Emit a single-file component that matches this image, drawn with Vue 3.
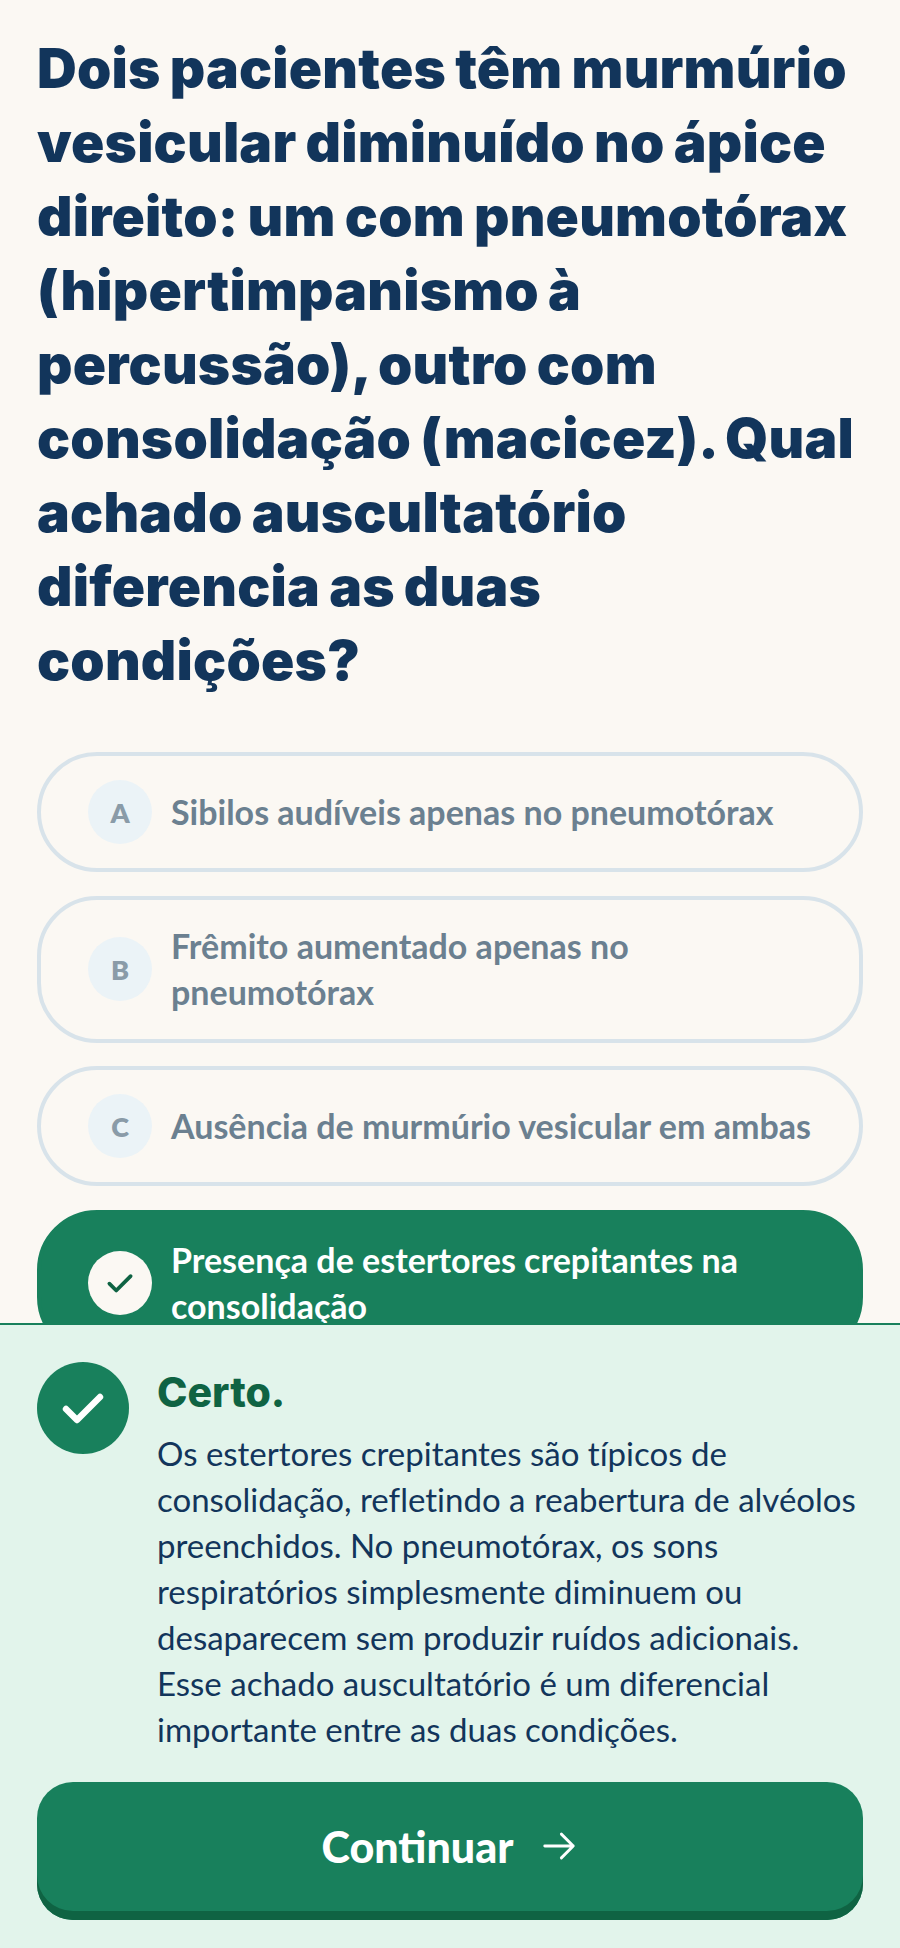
<template>
  <div class="screen">
    <div class="scroll">
      <h1 class="question">Dois pacientes têm murmúrio vesicular diminuído no ápice direito: um com pneumotórax (hipertimpanismo à percussão), outro com consolidação (macicez). Qual achado auscultatório diferencia as duas condições?</h1>
      <div class="options">
        <div v-for="opt in options" :key="opt.letter" class="option" :class="{ correct: opt.correct }">
          <span class="badge">
            <svg v-if="opt.correct" width="30" height="30" viewBox="0 0 24 24" fill="none">
              <path d="M3.500 12.500l5.500 5.500L20.500 6.500" stroke="#0f6343" stroke-width="3" stroke-linecap="round" stroke-linejoin="round" />
            </svg>
            <template v-else>{{ opt.letter }}</template>
          </span>
          <span class="option-text">{{ opt.text }}</span>
        </div>
      </div>
    </div>
    <div class="feedback">
      <div class="feedback-row">
        <span class="feedback-icon">
          <svg width="48" height="48" viewBox="0 0 24 24" fill="none">
            <path d="M3.500 12.500l5.500 5.500L20.500 6.500" stroke="#fff" stroke-width="3.200" stroke-linecap="round" stroke-linejoin="round" />
          </svg>
        </span>
        <div class="feedback-body">
          <div class="feedback-title">Certo.</div>
          <p class="feedback-text">Os estertores crepitantes são típicos de consolidação, refletindo a reabertura de alvéolos preenchidos. No pneumotórax, os sons respiratórios simplesmente diminuem ou desaparecem sem produzir ruídos adicionais. Esse achado auscultatório é um diferencial importante entre as duas condições.</p>
        </div>
      </div>
      <button class="continue">
        Continuar
        <svg width="38" height="38" viewBox="0 0 24 24" fill="none">
          <path d="M3 12h18M13.500 4.500L21 12l-7.500 7.500" stroke="#fff" stroke-width="1.800" stroke-linecap="round" stroke-linejoin="round" />
        </svg>
      </button>
    </div>
  </div>
</template>

<script setup>
const options = [
  { letter: 'A', text: 'Sibilos audíveis apenas no pneumotórax' },
  { letter: 'B', text: 'Frêmito aumentado apenas no pneumotórax' },
  { letter: 'C', text: 'Ausência de murmúrio vesicular em ambas' },
  { letter: 'D', text: 'Presença de estertores crepitantes na consolidação', correct: true },
]
</script>

<style>
body {
  background: #fbf8f3;
}
</style>

<style scoped>
.screen {
  width: 900px;
  height: 1948px;
  display: flex;
  flex-direction: column;
  overflow: hidden;
  background: #fbf8f3;
  font-family: Lato, sans-serif;
  font-variant-ligatures: none;
}

.scroll {
  flex: 1;
  min-height: 0;
  overflow: hidden;
  padding: 31px 37px 0;
}

.question {
  margin: 0 0 55px;
  font-family: Inter, sans-serif;
  font-size: 55px;
  font-weight: 900;
  line-height: 74px;
  letter-spacing: 0.2px;
  word-spacing: -2px;
  color: #12355b;
}

.options {
  display: flex;
  flex-direction: column;
  gap: 23.5px;
}

.option {
  display: flex;
  align-items: center;
  gap: 19px;
  min-height: 120px;
  padding: 23.5px 38px 23.5px 47px;
  box-sizing: border-box;
  border: 4px solid #d8e3ea;
  border-radius: 60px;
  color: #6b8090;
}

.option.correct {
  background: #18805c;
  border-color: #18805c;
  color: #fff;
}

.badge {
  flex: none;
  width: 64px;
  height: 64px;
  border-radius: 50%;
  display: flex;
  align-items: center;
  justify-content: center;
  background: #ebf3f7;
  color: #8a9ba8;
  font-size: 27px;
  font-weight: 800;
}

.correct .badge {
  background: #fbf8f3;
}

.option-text {
  font-size: 34px;
  font-weight: 700;
  line-height: 46px;
}

.feedback {
  flex: none;
  height: 625px;
  box-sizing: border-box;
  border-top: 2px solid #18805c;
  background: #e2f4eb;
  padding: 37px 37px 0;
}

.feedback-row {
  display: flex;
  gap: 28px;
}

.feedback-icon {
  flex: none;
  width: 92px;
  height: 92px;
  border-radius: 50%;
  background: #18805c;
  display: flex;
  align-items: center;
  justify-content: center;
}

.feedback-title {
  margin-top: 7px;
  font-family: Inter, sans-serif;
  font-size: 41px;
  font-weight: 800;
  line-height: 46px;
  color: #0f6343;
}

.feedback-text {
  margin: 15px 0 0;
  font-size: 33px;
  line-height: 46px;
  color: #12355b;
}

.continue {
  display: flex;
  align-items: center;
  justify-content: center;
  gap: 27px;
  width: 100%;
  height: 138px;
  margin-top: 30px;
  padding: 0 0 10px;
  border: none;
  border-radius: 36px;
  background: #18805c;
  box-shadow: inset 0 -9px 0 #0f6343;
  color: #fff;
  font-family: Lato, sans-serif;
  font-size: 43px;
  font-weight: 900;
}
</style>
